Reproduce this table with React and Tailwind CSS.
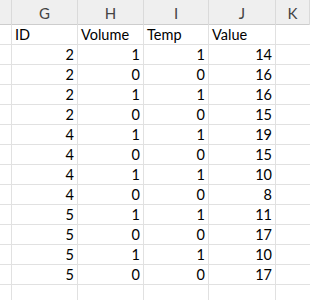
const cols = ['', 'G', 'H', 'I', 'J', 'K'];

const rows = [
  [2, 1, 1, 14],
  [2, 0, 0, 16],
  [2, 1, 1, 16],
  [2, 0, 0, 15],
  [4, 1, 1, 19],
  [4, 0, 0, 15],
  [4, 1, 1, 10],
  [4, 0, 0, 8],
  [5, 1, 1, 11],
  [5, 0, 0, 17],
  [5, 1, 1, 10],
  [5, 0, 0, 17],
];

const grid = 'grid grid-cols-[12px_66px_66px_65px_67px_1fr]';

export default function App() {
  return (
    <div className="w-[310px] h-[300px] overflow-hidden bg-white text-[14.5px] text-black" style={{ fontFamily: 'Lato, "Open Sans", sans-serif' }}>
      {/* column letters */}
      <div className={`${grid} h-[25px] bg-[#efefef] border-b border-[#cdcdcd]`}>
        {cols.map((c, i) => (
          <div key={i} className="border-r border-[#dadada] flex items-center justify-center text-[#444] text-[15px] pt-[2px]">
            {c}
          </div>
        ))}
      </div>

      {/* header row */}
      <div className={`${grid} h-[20px] border-b border-[#e1e1e1]`}>
        <div className="border-r border-[#e1e1e1]" />
        {['ID', 'Volume', 'Temp', 'Value'].map((h) => (
          <div key={h} className="border-r border-[#e1e1e1] px-[3px] flex items-end leading-[18px]">{h}</div>
        ))}
        <div />
      </div>

      {rows.map((r, i) => (
        <div key={i} className={`${grid} h-[20px] border-b border-[#e1e1e1]`}>
          <div className="border-r border-[#e1e1e1]" />
          {r.map((v, j) => (
            <div key={j} className="border-r border-[#e1e1e1] px-[3px] flex items-end justify-end leading-[18px]">{v}</div>
          ))}
          <div />
        </div>
      ))}

      <div className={`${grid} h-[20px]`}>
        <div className="border-r border-[#e1e1e1]" />
        <div className="border-r border-[#e1e1e1]" />
        <div className="border-r border-[#e1e1e1]" />
        <div className="border-r border-[#e1e1e1]" />
        <div className="border-r border-[#e1e1e1]" />
        <div />
      </div>
    </div>
  );
}
